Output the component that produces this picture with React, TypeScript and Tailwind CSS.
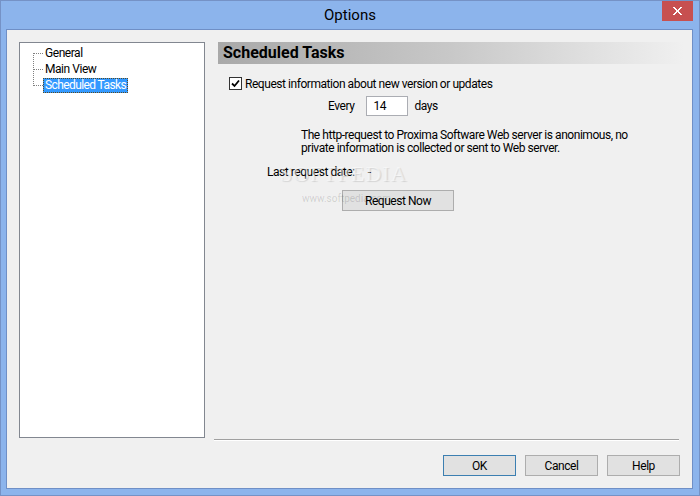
import React from "react";

const ui = { fontFamily: "Roboto, 'Noto Sans', 'Liberation Sans', sans-serif", letterSpacing: "-0.45px" };

function TreeLines() {
  // dotted connectors of the tree view
  return (
    <svg width="10" height="48" className="shrink-0" shapeRendering="crispEdges">
      <g stroke="#808080" strokeWidth="1" strokeDasharray="1 1">
        <line x1="0.5" y1="8" x2="0.5" y2="41" />
        <line x1="1" y1="8.5" x2="10" y2="8.5" />
        <line x1="1" y1="24.5" x2="10" y2="24.5" />
        <line x1="1" y1="40.5" x2="10" y2="40.5" />
      </g>
    </svg>
  );
}

function Button({ label, focused, className }: { label: string; focused?: boolean; className?: string }) {
  return (
    <div
      className={
        "flex items-center justify-center h-[21px] bg-[#e1e1e1] border text-[12px] text-black " +
        (focused ? "border-[#3c7fb1] " : "border-[#adadad] ") +
        (className ?? "")
      }
    >
      {label}
    </div>
  );
}

export default function App() {
  return (
    <div
      className="w-[700px] h-[496px] bg-[#8cb4ec] border border-[#7592c6] flex flex-col overflow-hidden select-none"
      style={ui}
    >
      {/* Title bar */}
      <div className="h-[28px] flex items-start shrink-0">
        <div className="w-[37px]" />
        <div className="flex-1 text-center text-[15px] leading-[28px] text-black tracking-normal">Options</div>
        <div className="w-[31px] h-[20px] bg-[#c75050] mr-[6px] flex items-center justify-center">
          <svg width="9" height="8" viewBox="0 0 9 8" shapeRendering="crispEdges">
            <path d="M0 0h2v1H0zM7 0h2v1H7zM1 1h2v1H1zM6 1h2v1H6zM2 2h2v1H2zM5 2h2v1H5zM3 3h3v2H3zM2 5h2v1H2zM5 5h2v1H5zM1 6h2v1H1zM6 6h2v1H6zM0 7h2v1H0zM7 7h2v1H7z" fill="#fff" />
          </svg>
        </div>
      </div>

      {/* Client area */}
      <div className="flex-1 ml-[5px] mr-[6px] mb-[6px] border border-[#6f8fc6] bg-[#f0f0f0] flex flex-col">
        <div className="flex pt-[12px] pl-[12px] pr-[8px]">
          {/* Tree */}
          <div className="w-[186px] h-[396px] bg-white border border-[#828790] shrink-0">
            <div className="flex pt-[2px] pl-[13px]">
              <TreeLines />
              <div className="flex flex-col text-[12px] text-black">
                <div className="h-[16px] leading-[16px] px-[2px]">General</div>
                <div className="h-[16px] leading-[16px] px-[2px]">Main View</div>
                <div className="h-[16px] flex items-center">
                  <span className="h-[15px] leading-[13px] px-[1px] bg-[#3399ff] text-white border border-dotted border-[#5a4a20] tracking-[-0.6px]">
                    Scheduled Tasks
                  </span>
                </div>
              </div>
            </div>
          </div>

          {/* Page */}
          <div className="flex-1 ml-[9px] flex flex-col">
            <div
              className="ml-[4px] h-[22px] flex items-center pl-[5px] text-[16px] font-bold text-black tracking-normal"
              style={{ background: "linear-gradient(to right, #a9a9a9 0%, #c8c8c8 50%, #f0f0f0 100%)" }}
            >
              Scheduled Tasks
            </div>

            <div className="relative ml-[15px] mt-[12px] text-[12px] text-black">
              <div className="flex items-center gap-[3px] h-[15px]">
                <div className="w-[13px] h-[13px] border border-[#333] bg-white flex items-center justify-center">
                  <svg width="9" height="9" viewBox="0 0 9 9">
                    <path d="M1 4.5 L3.5 7 L8 1.5" stroke="#000" strokeWidth="1.8" fill="none" />
                  </svg>
                </div>
                <span>Request information about new version or updates</span>
              </div>

              <div className="flex items-center mt-[5px] h-[20px] pl-[99px]">
                <span>Every</span>
                <div className="ml-[12px] w-[42px] h-[20px] bg-white border border-[#abadb3] flex items-center pl-[6px]">14</div>
                <span className="ml-[6px]">days</span>
              </div>

              <div className="mt-[13px] ml-[72px] leading-[13px] w-[335px]">
                The http-request to Proxima Software Web server is anonimous, no private information is collected or sent to Web server.
              </div>

              <div className="flex mt-[9px] pl-[38px] h-[15px] items-center">
                <span>Last request date:</span>
                <span className="ml-[13px]">-</span>
              </div>

              {/* watermark */}
              <div
                className="absolute left-[51px] top-[87px] text-[22px] text-white/50 leading-none tracking-[1px] pointer-events-none"
                style={{ fontFamily: "'Liberation Serif', serif", textShadow: "1px 1px 1px rgba(0,0,0,0.12)" }}
              >
                SOFTPEDIA
              </div>
              <div className="absolute left-[73px] top-[115px] text-[10px] text-black/15 tracking-normal pointer-events-none">
                www.softpedia.com
              </div>

              <div className="pl-[113px] mt-[11px]">
                <Button label="Request Now" className="w-[112px]" />
              </div>
            </div>

            <div className="mt-auto -mb-[3px] mr-[5px] h-[2px] border-t border-[#a0a0a0] border-b border-b-white" />
          </div>
        </div>

        {/* Buttons */}
        <div className="flex justify-end gap-[9px] pr-[12px] mt-[17px]">
          <Button label="OK" focused className="w-[73px]" />
          <Button label="Cancel" className="w-[73px]" />
          <Button label="Help" className="w-[73px]" />
        </div>
      </div>
    </div>
  );
}
